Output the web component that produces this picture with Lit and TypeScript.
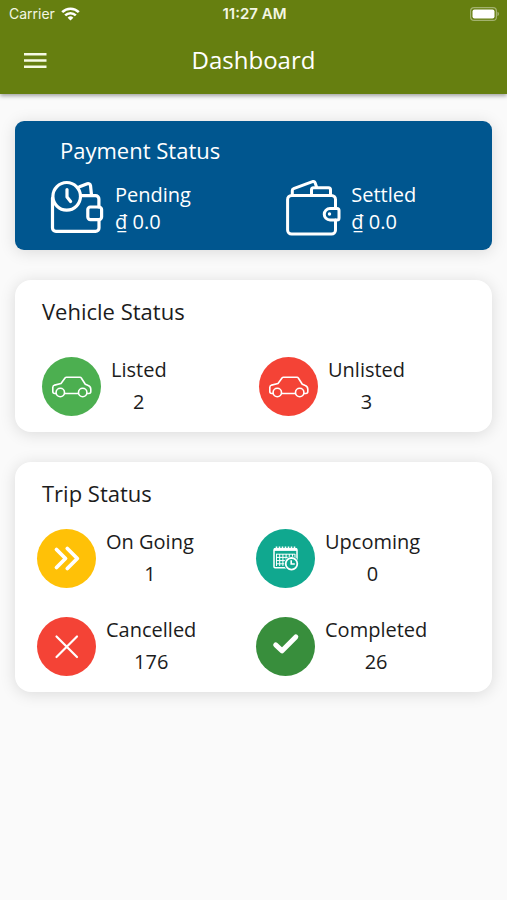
import { LitElement, html, css, svg, type SVGTemplateResult } from "lit";
import { customElement, property } from "lit/decorators.js";

const pendingIcon = svg`
  <svg viewBox="0 0 56 56" fill="none" stroke="#fff" stroke-width="3.2" stroke-linecap="round" stroke-linejoin="round">
    <circle cx="17.7" cy="16.3" r="13.8"/>
    <path d="M18 9.5V17l3.6 4.6"/>
    <path d="M3.5 18v30a3.4 3.4 0 0 0 3.4 3.4h39.7a3.4 3.4 0 0 0 3.4-3.4v-8.5M31.5 15.7h15a3.4 3.4 0 0 1 3.4 3.4V27"/>
    <path d="M30.5 6.8l7.8-3a2.4 2.4 0 0 1 3.2 1.7l1 9.5"/>
    <rect x="38.8" y="27" width="13.8" height="12.6" rx="2.6"/>
  </svg>`;

const settledIcon = svg`
  <svg viewBox="0 0 56 56" fill="none" stroke="#fff" stroke-width="3" stroke-linecap="round" stroke-linejoin="round">
    <path d="M50.500 28V19.500a4 4 0 0 0-4-4H6.600a4 4 0 0 0-4 4V50a4 4 0 0 0 4 4H46.500a4 4 0 0 0 4-4V40"/>
    <path d="M45 28.500h7a2 2 0 0 1 2 2v7.500a2 2 0 0 1-2 2h-7a5.700 5.700 0 0 1 0-11.500z"/>
    <circle cx="44.500" cy="34" r="1.700" fill="#fff" stroke="none"/>
    <path d="M7.300 15V10.500a2 2 0 0 1 1.300-1.900L27.500 1.600a2 2 0 0 1 2.600 1.200l1.400 4"/>
    <path d="M26.500 15V9.700a2 2 0 0 1 2-2h15a2 2 0 0 1 2 2V15"/>
  </svg>`;

const carIcon = svg`
  <svg viewBox="0 0 59 59" fill="none" stroke="#fff" stroke-width="1.6" stroke-linejoin="round">
    <path d="M14 36.500h-1.200a2 2 0 0 1-2-2V30.500a2.500 2.500 0 0 1 1.800-2.400l6.400-1.600 4.200-5.700a1.500 1.500 0 0 1 1.200-.6H38a1.500 1.500 0 0 1 1.300.8l4 6.200 3 1.300a4 4 0 0 1 2.500 3.700v2.300a2 2 0 0 1-2 2H45M22.600 36.500H36.500"/>
    <circle cx="18.300" cy="35.500" r="4.200"/>
    <circle cx="40.700" cy="35.500" r="4.200"/>
  </svg>`;

const ongoingIcon = svg`
  <svg viewBox="0 0 59 59" fill="none" stroke="#fff" stroke-width="3.8" stroke-linecap="round" stroke-linejoin="round">
    <path d="M19.500 20.500l9 9-9 9"/>
    <path d="M30.300 19.500l10 10-10 10"/>
  </svg>`;

const calendarIcon = svg`
  <svg viewBox="0 0 59 59" fill="none">
    <rect x="18" y="20" width="23" height="18.800" rx="1" stroke="#fff" stroke-width="1.500"/>
    <path d="M17.900 20.500h23.200" stroke="#fff" stroke-width="2.800"/>
    <path d="M20.500 17.500v3M23.500 17.500v3M26.500 17.500v3M29.500 17.500v3M32.500 17.500v3M35.500 17.500v3M38.500 17.500v3" stroke="#fff" stroke-width="1.600"/>
    <path d="M20 25.200h19M20 28.400h19M20 31.600h12M20 34.800h10M20.500 25v12M23.700 25v12M26.900 25v12M30.100 25v9M33.300 25v5M36.500 25v5M39 25v5" stroke="#fff" stroke-width="1"/>
    <circle cx="35.500" cy="34.800" r="7.400" fill="#10a88f"/>
    <circle cx="35.500" cy="34.800" r="5.800" stroke="#fff" stroke-width="1.800"/>
    <path d="M35.200 31.200v3.800h3.600" stroke="#fff" stroke-width="1.600"/>
  </svg>`;

const crossIcon = svg`
  <svg viewBox="0 0 59 59" fill="none" stroke="#fff" stroke-width="2.200" stroke-linecap="round">
    <path d="M19.500 19.500l20.500 20.500M40 19.500L19.500 40"/>
  </svg>`;

const checkIcon = svg`
  <svg viewBox="0 0 59 59" fill="none" stroke="#fff" stroke-width="5" stroke-linecap="round" stroke-linejoin="round">
    <path d="M19.700 27.900l6.400 5.900L39.800 19.900"/>
  </svg>`;

@customElement("status-item")
export class StatusItem extends LitElement {
  @property() label = "";
  @property() value = "";
  @property() tone = "";
  @property({ attribute: false }) icon?: SVGTemplateResult;

  static styles = css`
    :host {
      display: flex;
      align-items: center;
      gap: 10px;
      min-width: 0;
      font-size: 20px;
      line-height: 32px;
    }
    .badge {
      flex: none;
      width: 59px;
      height: 59px;
      border-radius: 50%;
    }
    .badge svg {
      display: block;
      width: 100%;
      height: 100%;
    }
    .green { background: #4caf50; }
    .red { background: #f44336; }
    .amber { background: #ffc107; }
    .teal { background: #10a88f; }
    .forest { background: #388e3c; }
    .text { text-align: center; }
    .wallet {
      width: 56px;
      height: 56px;
      border-radius: 0;
    }
    .wallet + .text {
      line-height: 27px;
      text-align: left;
    }
  `;

  render() {
    return html`
      <div class="badge ${this.tone}" aria-hidden="true">${this.icon}</div>
      <div class="text">
        <div>${this.label}</div>
        <div>${this.value}</div>
      </div>`;
  }
}

@customElement("app-root")
export class AppRoot extends LitElement {
  static styles = css`
    :host {
      display: block;
      min-height: 100vh;
      background: #fafafa;
      color: #1c1c1c;
      font-family: "Open Sans", "Noto Sans", sans-serif;
    }
    .header {
      background: #667f10;
      color: #fff;
      box-shadow: 0 2px 4px rgba(0, 0, 0, 0.35);
    }
    .statusbar {
      display: grid;
      grid-template-columns: 1fr auto 1fr;
      align-items: center;
      height: 27px;
      padding: 0 7px 0 9px;
      font-family: Inter, sans-serif;
      font-size: 14px;
      color: #f3f6e4;
    }
    .carrier {
      display: flex;
      align-items: center;
      gap: 6px;
    }
    .wifi { width: 19px; height: 14px; }
    .time {
      font-size: 15px;
      font-weight: 600;
    }
    .battery {
      justify-self: end;
      width: 30px;
      height: 14px;
    }
    .appbar {
      display: grid;
      grid-template-columns: 1fr auto 1fr;
      align-items: center;
      height: 65px;
      padding: 0 19px 2px;
    }
    .menu {
      width: 32px;
      height: 32px;
      padding: 0;
      border: 0;
      background: none;
      cursor: pointer;
    }
    .menu svg { display: block; }
    .title {
      margin: 0;
      font-size: 24px;
      font-weight: 400;
      line-height: 32px;
    }
    .main {
      display: grid;
      gap: 30px;
      padding: 27px 15px;
    }
    .card {
      border-radius: 16px;
      background: #fff;
      box-shadow: 0 2px 16px rgba(0, 0, 0, 0.13);
    }
    .heading {
      margin: 0;
      font-size: 22px;
      font-weight: 400;
      line-height: 30px;
    }
    .items {
      display: grid;
      grid-template-columns: 1fr 1fr;
    }
    .payment {
      padding: 14px 0 14px 34px;
      border-radius: 9px;
      background: #00568f;
      color: #fff;
    }
    .payment .heading { padding-left: 11px; }
    .payment .items {
      grid-template-columns: 8fr 7fr;
      margin-top: 15px;
    }
    .vehicle { padding: 16px 16px 14px 27px; }
    .vehicle .items { margin-top: 28px; }
    .trip { padding: 16px 17px 14px 22px; }
    .trip .heading { padding-left: 5px; }
    .trip .items {
      margin-top: 18px;
      row-gap: 24px;
    }
  `;

  render() {
    return html`
      <header class="header">
        <div class="statusbar">
          <div class="carrier">
            <span>Carrier</span>
            <svg class="wifi" viewBox="0 0 19 14" aria-hidden="true" fill="none" stroke="#fff" stroke-width="2.600">
              <path d="M1.200 5.200a11.800 11.800 0 0 1 16.600 0M4.200 8.400a7.500 7.500 0 0 1 10.600 0"/>
              <path d="M9.500 13.600L6.600 10.700a4.100 4.100 0 0 1 5.800 0z" fill="#fff" stroke="none"/>
            </svg>
          </div>
          <div class="time">11:27 AM</div>
          <svg class="battery" viewBox="0 0 30 14" aria-hidden="true">
            <rect x=".6" y=".6" width="25.800" height="12.800" rx="3.500" fill="none" stroke="#fff" stroke-opacity=".4" stroke-width="1.200"/>
            <rect x="2.500" y="2.500" width="22" height="9" rx="2" fill="#fff"/>
            <path d="M27.500 4.800a2.400 2.400 0 0 1 0 4.400z" fill="#fff" fill-opacity=".45"/>
          </svg>
        </div>
        <div class="appbar">
          <button class="menu" type="button" aria-label="Open menu">
            <svg width="32" height="32" viewBox="0 0 32 32" stroke="#f6fae4" stroke-width="2.600">
              <path d="M5 10.300h22.500M5 16.500h22.500M5 22.700h22.500"/>
            </svg>
          </button>
          <h1 class="title">Dashboard</h1>
        </div>
      </header>
      <main class="main">
        <section class="card payment">
          <h2 class="heading">Payment Status</h2>
          <div class="items">
            <status-item label="Pending" value="₫ 0.0" tone="wallet" .icon=${pendingIcon}></status-item>
            <status-item label="Settled" value="₫ 0.0" tone="wallet" .icon=${settledIcon}></status-item>
          </div>
        </section>
        <section class="card vehicle">
          <h2 class="heading">Vehicle Status</h2>
          <div class="items">
            <status-item label="Listed" value="2" tone="green" .icon=${carIcon}></status-item>
            <status-item label="Unlisted" value="3" tone="red" .icon=${carIcon}></status-item>
          </div>
        </section>
        <section class="card trip">
          <h2 class="heading">Trip Status</h2>
          <div class="items">
            <status-item label="On Going" value="1" tone="amber" .icon=${ongoingIcon}></status-item>
            <status-item label="Upcoming" value="0" tone="teal" .icon=${calendarIcon}></status-item>
            <status-item label="Cancelled" value="176" tone="red" .icon=${crossIcon}></status-item>
            <status-item label="Completed" value="26" tone="forest" .icon=${checkIcon}></status-item>
          </div>
        </section>
      </main>`;
  }
}
